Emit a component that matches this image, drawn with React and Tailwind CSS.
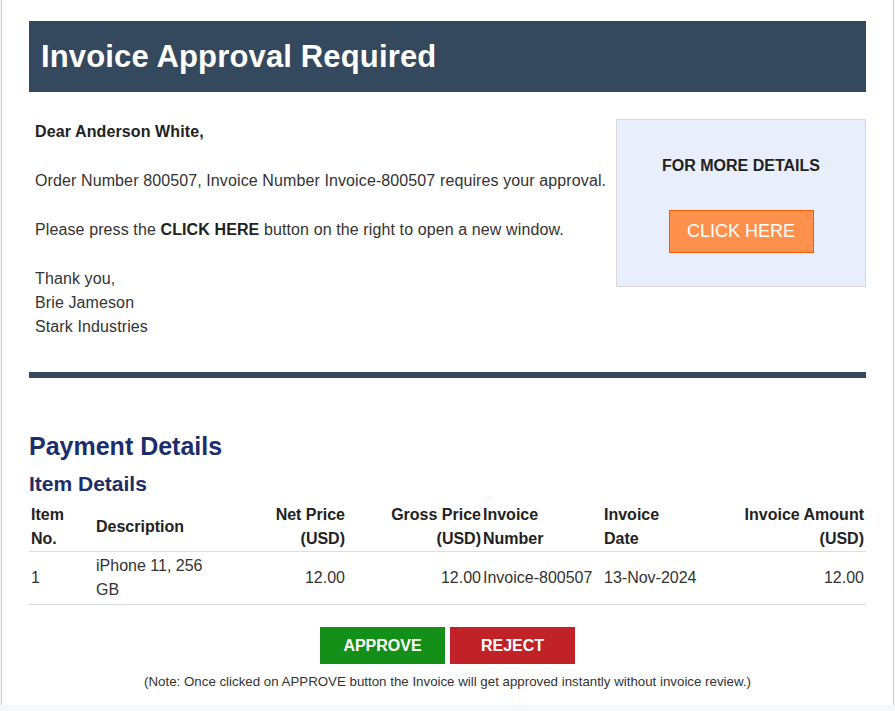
const FONT = { fontFamily: '"Liberation Sans", Arial, sans-serif' };

const TH = 'px-[2px] pt-[0px] pb-[0px] align-middle text-[16px] font-bold leading-[24px] text-[#222]';
const TD = 'px-[2px] py-[2px] align-middle text-[16px] leading-[24px] text-[#333]';

export default function App() {
  return (
    <div className="min-h-[711px] bg-[#f5f7fb]" style={FONT}>
      <div className="ml-[1px] w-[893px] border-x border-[#cfcfcf] bg-white px-[27px] pt-[21px] pb-[15px]">
        <div className="flex h-[71px] items-center bg-[#34495e] px-[12px]">
          <h1 className="text-[31px] font-bold leading-[36px] tracking-[0.15px] text-white">Invoice Approval Required</h1>
        </div>

        <div className="mt-[27px] flex">
          <div className="flex-1 px-[6px] pt-[1px] text-[16px] leading-[24px] tracking-[0.11px] text-[#333]">
            <p className="font-bold text-[#222]">Dear Anderson White,</p>
            <p className="mt-[25px]">Order Number 800507, Invoice Number Invoice-800507 requires your approval.</p>
            <p className="mt-[25px]">
              Please press the <b className="text-[#222]">CLICK HERE</b> button on the right to open a new window.
            </p>
            <p className="mt-[25px]">
              Thank you,
              <br />
              Brie Jameson
              <br />
              Stark Industries
            </p>
          </div>
          <div className="flex h-[168px] w-[250px] flex-col items-center border border-[#d9d9d9] bg-[#e8eefc] pt-[36px]">
            <p className="text-[16px] font-bold leading-[20px] text-[#222]">FOR MORE DETAILS</p>
            <button className="mt-[34px] h-[43px] w-[145px] border border-[#f25c05] bg-[#ff914d] text-[18px] text-white">
              CLICK HERE
            </button>
          </div>
        </div>

        <div className="mt-[33px] h-[6px] bg-[#34495e]" />

        <h2 className="mt-[53px] text-[25px] font-bold leading-[30px] text-[#1c2d6b]">Payment Details</h2>
        <h3 className="mt-[10px] text-[21px] font-bold leading-[26px] text-[#1c2d6b]">Item Details</h3>

        <table className="mt-[6px] w-full table-fixed border-collapse">
          <colgroup>
            <col className="w-[65px]" />
            <col className="w-[125px]" />
            <col className="w-[128px]" />
            <col className="w-[136px]" />
            <col className="w-[119px]" />
            <col className="w-[97px]" />
            <col />
          </colgroup>
          <thead>
            <tr className="border-b border-[#dddddd]">
              <th className={`${TH} text-left`}>Item<br />No.</th>
              <th className={`${TH} text-left`}>Description</th>
              <th className={`${TH} text-right`}>Net Price<br />(USD)</th>
              <th className={`${TH} text-right`}>Gross Price<br />(USD)</th>
              <th className={`${TH} !pl-0 text-left`}>Invoice<br />Number</th>
              <th className={`${TH} text-left`}>Invoice<br />Date</th>
              <th className={`${TH} text-right`}>Invoice Amount<br />(USD)</th>
            </tr>
          </thead>
          <tbody>
            <tr className="border-b border-[#dddddd]">
              <td className={`${TD} text-left`}>1</td>
              <td className={`${TD} text-left`}>iPhone 11, 256<br />GB</td>
              <td className={`${TD} text-right`}>12.00</td>
              <td className={`${TD} text-right`}>12.00</td>
              <td className={`${TD} !pl-0 text-left`}>Invoice-800507</td>
              <td className={`${TD} text-left`}>13-Nov-2024</td>
              <td className={`${TD} text-right`}>12.00</td>
            </tr>
          </tbody>
        </table>

        <div className="mt-[22px] flex justify-center gap-[5px]">
          <button className="h-[37px] w-[125px] bg-[#148f17] text-[16px] font-bold text-white">APPROVE</button>
          <button className="h-[37px] w-[125px] bg-[#c02227] text-[16px] font-bold text-white">REJECT</button>
        </div>
        <p className="mt-[10px] text-center text-[13.3px] leading-[16px] text-[#333]">
          (Note: Once clicked on APPROVE button the Invoice will get approved instantly without invoice review.)
        </p>
      </div>
    </div>
  );
}
